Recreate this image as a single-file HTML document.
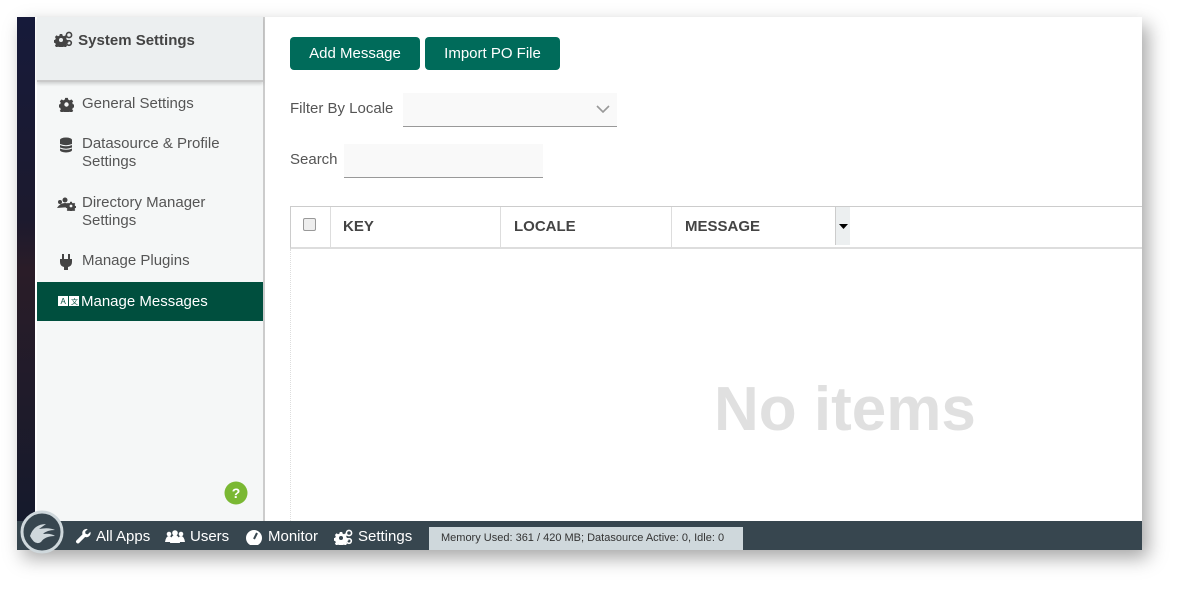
<!DOCTYPE html>
<html><head><style>
*{box-sizing:border-box;margin:0;padding:0}
body{width:1190px;height:598px;background:#fff;font-family:"Liberation Sans",sans-serif;position:relative;overflow:hidden}
.frame{position:absolute;left:17px;top:17px;width:1125px;height:533px;background:#fff;box-shadow:6px 8px 18px rgba(0,0,0,.35)}
.dark{position:absolute;left:0;top:0;width:18px;height:504px;background:linear-gradient(#161a3a,#1c1a2e 40%,#2a1c28 50%,#151a2c)}
.side{position:absolute;left:20px;top:0;width:228px;height:504px;background:#f5f7f7;border-right:2px solid #ccc}
.shead{height:65px;background:#eceff0;border-bottom:2px solid #c9c9c9;box-shadow:0 2px 3px rgba(0,0,0,.15);padding:14px 0 0 17px;font-weight:bold;font-size:15px;color:#444}
.item{position:absolute;left:22px;font-size:15px;color:#555;line-height:18px}
.item svg{position:absolute;left:0;top:2px}
.item span{display:block;padding-left:23px}
.active{position:absolute;left:0;top:265px;width:226px;height:39px;background:#004f3e;color:#fff;font-size:15px;padding:11px 0 0 44px}
.btn{position:absolute;top:20px;height:33px;background:#006b5a;color:#fff;border-radius:4px;font-size:15px;line-height:33px;text-align:center}
.lbl{position:absolute;font-size:15px;color:#555}
.bar{position:absolute;left:0;top:504px;width:1125px;height:29px;background:#37464f;color:#fff;font-size:15px}
.bar .n{position:absolute;top:7px}
.mem{position:absolute;left:412px;top:6px;width:314px;height:23px;background:#cfd8dc;color:#333;font-size:11px;line-height:23px;padding-left:12px}
</style></head><body>
<svg width="0" height="0" style="position:absolute"><defs>
<path id="cog" d="M-1.2-6h2.4l.4 1.6 1.4.6 1.4-.9 1.7 1.7-.9 1.4.6 1.4 1.6.4v2.4l-1.6.4-.6 1.4.9 1.4-1.7 1.7-1.4-.9-1.4.6-.4 1.6h-2.4l-.4-1.6-1.4-.6-1.4.9-1.7-1.7.9-1.4-.6-1.4-1.6-.4v-2.4l1.6-.4.6-1.4-.9-1.4 1.7-1.7 1.4.9 1.4-.6z"/>
</defs></svg>
<div class="frame">
 <div class="dark"></div>
 <div class="side">
  <div class="shead"><svg width="20" height="16" viewBox="0 0 20 16" style="vertical-align:-2px"><g transform="translate(7,9)" fill="#444"><use href="#cog"/></g><circle cx="7" cy="9" r="2" fill="#eceff0"/><circle cx="15" cy="4" r="2.6" fill="none" stroke="#444" stroke-width="1.6"/><circle cx="15" cy="12" r="2.3" fill="none" stroke="#444" stroke-width="1.6"/></svg> System Settings</div>
  <div class="item" style="top:78px"><svg width="15" height="15" viewBox="-7.5 -7.5 15 15"><g fill="#444" transform="scale(1.1)"><use href="#cog"/></g><circle r="2.2" fill="#f5f7f7"/></svg><span>General Settings</span></div>
  <div class="item" style="top:118px"><svg width="14" height="16" viewBox="0 0 14 16"><ellipse cx="7" cy="3" rx="6" ry="2.5" fill="#444"/><rect x="1" y="3" width="12" height="10" fill="#444"/><ellipse cx="7" cy="13" rx="6" ry="2.5" fill="#444"/><path d="M1 7.5Q7 10 13 7.5M1 11Q7 13.5 13 11" stroke="#f5f7f7" fill="none"/></svg><span>Datasource &amp; Profile<br>Settings</span></div>
  <div class="item" style="top:177px;left:19px"><svg width="20" height="15" viewBox="0 0 20 15"><circle cx="4" cy="6" r="2" fill="#444"/><circle cx="9" cy="4" r="2.5" fill="#444"/><path d="M1 12q3-5 8-5 4 0 5 4z" fill="#444"/><g transform="translate(15,10) scale(.7)" fill="#444"><use href="#cog"/></g><circle cx="15" cy="10" r="1.4" fill="#f5f7f7"/></svg><span style="padding-left:26px">Directory Manager<br>Settings</span></div>
  <div class="item" style="top:235px"><svg width="14" height="16" viewBox="0 0 14 16"><rect x="3" y="0" width="2" height="5" fill="#444"/><rect x="9" y="0" width="2" height="5" fill="#444"/><path d="M1 5h12v3q0 4-4 5v3H5v-3Q1 12 1 8z" fill="#444"/></svg><span>Manage Plugins</span></div>
  <div class="active"><svg width="22" height="11" viewBox="0 0 22 11" style="position:absolute;left:21px;top:14px"><rect x="0" y="0" width="10" height="10" fill="#fff"/><rect x="11" y="0" width="10" height="10" fill="#fff"/><text x="2.5" y="8" font-size="8" fill="#004f3e" font-family="Liberation Sans">A</text><text x="13" y="8" font-size="7" fill="#004f3e">文</text></svg>Manage Messages</div>
  <svg width="24" height="24" style="position:absolute;left:187px;top:464px"><circle cx="12" cy="12" r="11.5" fill="#7ab833"/><text x="12" y="17" text-anchor="middle" fill="#fff" font-size="14" font-weight="bold" font-family="Liberation Sans">?</text></svg>
 </div>
 <div class="btn" style="left:273px;width:130px">Add Message</div>
 <div class="btn" style="left:408px;width:135px">Import PO File</div>
 <div class="lbl" style="left:273px;top:83px">Filter By Locale</div>
 <div style="position:absolute;left:386px;top:76px;width:214px;height:34px;background:#f9f9f9;border-bottom:1px solid #999"><svg width="14" height="8" style="position:absolute;right:7px;top:12px"><path d="M1 1l6 6 6-6" stroke="#999" stroke-width="1.6" fill="none"/></svg></div>
 <div class="lbl" style="left:273px;top:134px">Search</div>
 <div style="position:absolute;left:327px;top:127px;width:199px;height:34px;background:#f9f9f9;border-bottom:1px solid #999"></div>
 <div style="position:absolute;left:273px;top:189px;width:852px;height:43px;border-top:1px solid #ccc;border-bottom:2px solid #ddd;border-left:1px solid #ccc;font-size:15px;font-weight:bold;color:#444">
  <div style="position:absolute;left:12px;top:11px;width:13px;height:13px;border:1px solid #999;border-radius:2px;background:#eee"></div>
  <div style="position:absolute;left:39px;top:0;height:41px;border-left:1px solid #ddd"></div>
  <div style="position:absolute;left:52px;top:11px">KEY</div>
  <div style="position:absolute;left:209px;top:0;height:41px;border-left:1px solid #ddd"></div>
  <div style="position:absolute;left:223px;top:11px">LOCALE</div>
  <div style="position:absolute;left:380px;top:0;height:41px;border-left:1px solid #ddd"></div>
  <div style="position:absolute;left:394px;top:11px">MESSAGE</div>
  <div style="position:absolute;left:544px;top:0;width:15px;height:38px;background:#eceff0;border-left:1px solid #ccc"><svg width="9" height="5" style="position:absolute;left:3px;top:17px"><path d="M0 0h9L4.5 5z" fill="#000"/></svg></div>
 </div>
 <div style="position:absolute;left:273px;top:232px;height:272px;border-left:1px dotted #ddd"></div>
 <div style="position:absolute;left:697px;top:357px;font-size:62px;font-weight:bold;color:#e0e0e0">No items</div>
 <div class="bar">
  <svg width="44" height="44" style="position:absolute;left:3px;top:-11px" viewBox="0 0 44 44"><circle cx="22" cy="22" r="20" fill="#37464f" stroke="#cfd8dc" stroke-width="3"/><path d="M10 26q4-12 16-12l-7 5q10-2 16 1-8 0-12 4 8-1 12 2-10 0-14 6-6 4-11-6z" fill="#cfd8dc"/></svg>
  <svg width="17" height="17" viewBox="0 0 16 16" style="position:absolute;left:58px;top:7px"><path d="M14.5 3.5l-2.5 2.5-2-.5-.5-2 2.5-2.5a4 4 0 0 0-5 5L1.5 11.5a1.6 1.6 0 0 0 2.5 2.5L9.5 8.5a4 4 0 0 0 5-5z" fill="#fff"/></svg>
  <span class="n" style="left:79px">All Apps</span>
  <svg width="20" height="14" style="position:absolute;left:148px;top:9px"><circle cx="4" cy="4" r="2.3" fill="#fff"/><circle cx="10" cy="3" r="2.8" fill="#fff"/><circle cx="16" cy="4" r="2.3" fill="#fff"/><path d="M0 12q1-6 4-6t4 6zM5 13q1-8 5-8t5 8zM12 12q1-6 4-6t4 6z" fill="#fff"/></svg>
  <span class="n" style="left:173px">Users</span>
  <svg width="18" height="16" style="position:absolute;left:228px;top:8px"><circle cx="9" cy="9" r="8" fill="#fff"/><path d="M9 10l3-6" stroke="#37464f" stroke-width="2"/></svg>
  <span class="n" style="left:251px">Monitor</span>
  <svg width="20" height="16" viewBox="0 0 20 16" style="position:absolute;left:317px;top:8px"><g transform="translate(7,9)" fill="#fff"><use href="#cog"/></g><circle cx="7" cy="9" r="2" fill="#37464f"/><circle cx="15" cy="4" r="2.6" fill="none" stroke="#fff" stroke-width="1.6"/><circle cx="15" cy="12" r="2.3" fill="none" stroke="#fff" stroke-width="1.6"/></svg>
  <span class="n" style="left:341px">Settings</span>
  <div class="mem">Memory Used: 361 / 420 MB; Datasource Active: 0, Idle: 0</div>
 </div>
</div>
</body></html>
